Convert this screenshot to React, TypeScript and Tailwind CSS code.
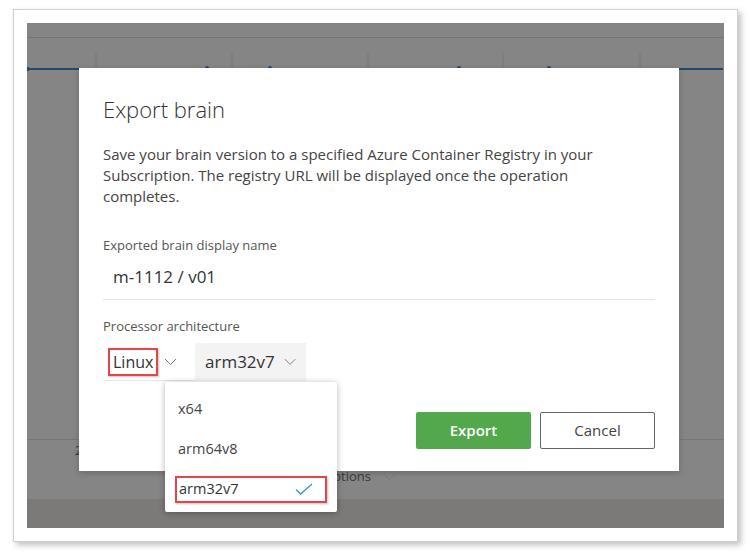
import React from "react";

const font = { fontFamily: '"Open Sans", "Noto Sans", sans-serif' };

function Chevron({ className = "" }: { className?: string }) {
  return (
    <svg width="13" height="8" viewBox="0 0 13 8" fill="none" className={className}>
      <path d="M1 1l5.5 5.5L12 1" stroke="#7a7a7a" strokeWidth="1" />
    </svg>
  );
}

const options = ["x64", "arm64v8", "arm32v7"];

export default function App() {
  return (
    <div className="w-[750px] h-[556px] bg-white pl-[13px] pt-[9px]" style={font}>
      {/* screenshot frame */}
      <div className="w-[725px] h-[533px] bg-white border border-[#cfcfcf] p-[13px] shadow-[3px_3px_6px_rgba(0,0,0,0.25)]">
        <div className="relative w-full h-full bg-[#858585] flex flex-col">
          {/* dimmed page behind the modal */}
          <div className="h-[15px] border-b border-[#747474]" />
          <svg width="696" height="120" className="block">
            {[69, 205, 341, 476, 613].map((x) => (
              <line key={x} x1={x} y1="15" x2={x} y2="120" stroke="#767676" strokeWidth="1" />
            ))}
            <line x1="0" y1="31" x2="60" y2="31" stroke="#23486b" strokeWidth="2" />
            <line x1="650" y1="31" x2="696" y2="31" stroke="#23486b" strokeWidth="2" />
            <circle cx="180" cy="30" r="2" fill="#23486b" />
            <circle cx="243" cy="30" r="2" fill="#23486b" />
            <circle cx="432" cy="30" r="2" fill="#23486b" />
            <circle cx="522" cy="30" r="2" fill="#23486b" />
            <circle cx="1" cy="31" r="2" fill="#23486b" />
          </svg>
          <div className="flex-1" />
          <div className="h-[60px] border-t border-[#767676] relative">
            <span className="absolute left-[48px] top-[2px] text-[12px] text-[#333]">2</span>
            <div className="absolute left-[296px] top-[27px] flex items-center gap-[12px] text-[13px] text-[#3a3a3a]">
              <span>Options</span>
              <Chevron />
            </div>
          </div>
          <div className="h-[29px] bg-[#7b7a79]" />

          {/* modal */}
          <div className="absolute left-[52px] top-[45px] w-[600px] h-[403px] bg-white shadow-[0_2px_6px_rgba(0,0,0,0.2)] px-[24px]">
            <h1 className="pt-[27px] text-[22px] leading-[28px] font-light text-[#333]">Export brain</h1>
            <p className="mt-[21px] text-[15px] leading-[21px] text-[#444] w-[505px]">
              Save your brain version to a specified Azure Container Registry in your Subscription. The registry URL will be displayed once the operation completes.
            </p>
            <div className="mt-[30px] text-[13px] leading-[16px] text-[#555]">Exported brain display name</div>
            <div className="mt-[2px] h-[45px] flex items-center pl-[10px] border-b border-[#e3e3e3] text-[17px] text-[#333]">
              m-1112 / v01
            </div>
            <div className="mt-[18px] text-[13px] leading-[16px] text-[#555]">Processor architecture</div>
            <div className="mt-[9px] h-[38px] flex items-stretch">
              <div className="w-[92px] flex items-center border-b border-[#e6e6e6]">
                <span className="ml-[5px] px-[3px] h-[28px] flex items-center border-2 border-[#e4454b] text-[16px] text-[#333] shadow-[1px_1px_2px_rgba(0,0,0,0.25)]">
                  Linux
                </span>
                <Chevron className="ml-[6px]" />
              </div>
              <div className="w-[111px] bg-[#f3f3f3] flex items-center px-[10px] text-[17px] text-[#333]">
                <span>arm32v7</span>
                <Chevron className="ml-[9px]" />
              </div>
            </div>
            <div className="mt-[31px] flex justify-end gap-[9px]">
              <button className="w-[115px] h-[37px] rounded-[2px] bg-[#53a84c] text-white text-[15px] font-semibold">Export</button>
              <button className="w-[115px] h-[37px] rounded-[2px] border border-[#666] bg-white text-[#444] text-[15px]">Cancel</button>
            </div>

            {/* dropdown menu */}
            <div className="absolute left-[86px] top-[314px] w-[172px] bg-white rounded-[2px] shadow-[0_1px_6px_rgba(0,0,0,0.3)] pt-[7px] pb-[3px]">
              {options.map((o) => (
                <div key={o} className="h-[40px] flex items-center px-[10px]">
                  {o === "arm32v7" ? (
                    <div className="w-[155px] h-[27px] flex items-center justify-between pl-[2px] pr-[12px] border-2 border-[#e4454b] shadow-[1px_1px_2px_rgba(0,0,0,0.25)] text-[14.5px] text-[#333]">
                      <span>{o}</span>
                      <svg width="18" height="12" viewBox="0 0 18 12" fill="none">
                        <path d="M1 6.5l4.5 4.5L17 1" stroke="#3a9fa0" strokeWidth="1.3" />
                      </svg>
                    </div>
                  ) : (
                    <span className="pl-[3px] text-[14.5px] text-[#444]">{o}</span>
                  )}
                </div>
              ))}
            </div>
          </div>
        </div>
      </div>
    </div>
  );
}
